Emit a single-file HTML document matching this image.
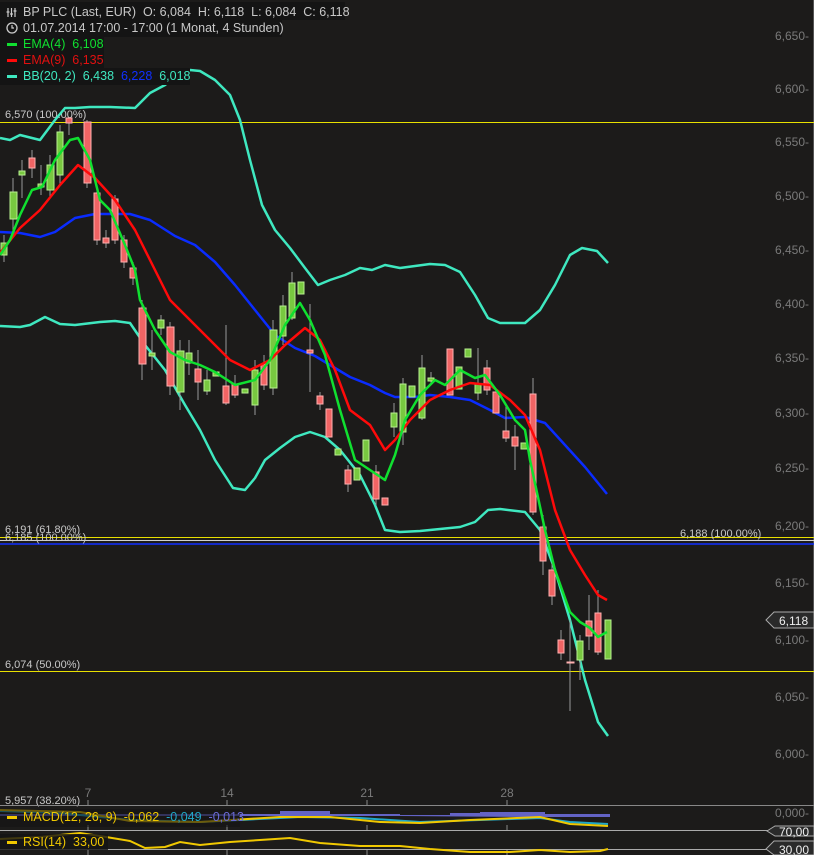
<!DOCTYPE html>
<html><head><meta charset="utf-8"><style>
html,body{margin:0;padding:0;background:#1c1b1a;}
svg{display:block;font-family:"Liberation Sans",sans-serif;}
.pre{white-space:pre;}
</style></head><body>
<svg width="814" height="855" viewBox="0 0 814 855" xmlns="http://www.w3.org/2000/svg">
<rect width="814" height="855" fill="#1c1b1a"/>
<line x1="813.5" y1="0" x2="813.5" y2="855" stroke="#555" stroke-width="1"/>
<g fill="#7a7a7a" font-size="12" text-anchor="end">
<text x="809" y="40">6,650-</text><text x="809" y="93">6,600-</text><text x="809" y="146">6,550-</text>
<text x="809" y="200">6,500-</text><text x="809" y="254">6,450-</text><text x="809" y="308">6,400-</text>
<text x="809" y="362">6,350-</text><text x="809" y="417">6,300-</text><text x="809" y="472">6,250-</text>
<text x="809" y="530">6,200-</text><text x="809" y="587">6,150-</text><text x="809" y="644">6,100-</text>
<text x="809" y="701">6,050-</text><text x="809" y="758">6,000-</text>
<text x="809" y="817">0,000-</text>
</g>
<g fill="#7a7a7a" font-size="12" text-anchor="middle">
<text x="88" y="797">7</text><text x="227" y="797">14</text><text x="367" y="797">21</text><text x="507" y="797">28</text>
</g>
<line x1="0" y1="122.5" x2="814" y2="122.5" stroke="#e8e000"/>
<line x1="0" y1="537.5" x2="814" y2="537.5" stroke="#e8e000"/>
<line x1="0" y1="540.5" x2="814" y2="540.5" stroke="#d0d0d0"/>
<line x1="0" y1="544" x2="814" y2="544" stroke="#1030ff" stroke-width="1.5"/>
<line x1="0" y1="671.5" x2="814" y2="671.5" stroke="#e8e000"/>
<g fill="#c8c8c8" font-size="11">
<text x="5" y="118">6,570 (100.00%)</text>
<text x="5" y="533">6,191 (61.80%)</text>
<text x="5" y="541">6,185 (100.00%)</text>
<text x="680" y="537">6,188 (100.00%)</text>
<text x="5" y="668">6,074 (50.00%)</text>
<text x="5" y="804">5,957 (38.20%)</text>
</g>
<g fill="none" stroke-width="2.5" stroke-linejoin="round">
<polyline stroke="#3fe8c0" points="0,138 10,140 20,135 40,140 55,120 65,108 75,108 90,107 110,107 135,108 150,93 165,85 180,72 190,70 200,71 215,80 230,95 240,120 250,160 262,205 275,230 290,248 305,268 318,285 330,280 345,275 360,268 372,270 385,265 400,268 415,266 430,264 445,265 460,272 475,295 488,318 500,323 525,323 540,310 555,285 570,255 582,248 597,251 608,263"/>
<polyline stroke="#3fe8c0" points="0,326 20,327 30,325 45,317 60,324 75,325 100,322 115,321 130,323 145,345 165,370 185,405 200,430 215,460 233,488 245,490 255,478 265,460 280,448 295,437 310,432 325,437 340,450 360,475 375,505 385,530 400,532 420,531 440,529 460,527 475,522 488,510 500,509 525,512 540,530 555,570 570,620 585,680 598,722 608,736"/>
<polyline stroke="#0a2cff" points="0,232 20,233 40,237 55,232 75,218 95,214 130,214 150,220 175,236 195,245 215,262 235,285 255,310 275,335 295,348 315,356 330,365 350,377 370,385 385,393 395,397 415,397 430,395 450,397 470,400 490,410 505,418 525,417 545,423 565,445 585,467 607,494"/>
</g>
<g stroke="#999" stroke-width="1">
<line x1="4" y1="235" x2="4" y2="262"/><line x1="13" y1="178" x2="13" y2="230"/><line x1="22" y1="160" x2="22" y2="198"/><line x1="32" y1="150" x2="32" y2="178"/><line x1="41" y1="165" x2="41" y2="195"/><line x1="50" y1="155" x2="50" y2="197"/><line x1="60" y1="125" x2="60" y2="185"/><line x1="69" y1="120" x2="69" y2="135"/><line x1="87" y1="120" x2="87" y2="188"/><line x1="97" y1="185" x2="97" y2="245"/><line x1="106" y1="230" x2="106" y2="248"/><line x1="115" y1="195" x2="115" y2="244"/><line x1="124" y1="235" x2="124" y2="268"/><line x1="133" y1="262" x2="133" y2="285"/><line x1="142" y1="300" x2="142" y2="380"/><line x1="152" y1="330" x2="152" y2="370"/><line x1="161" y1="315" x2="161" y2="335"/><line x1="170" y1="322" x2="170" y2="395"/><line x1="180" y1="340" x2="180" y2="410"/><line x1="189" y1="340" x2="189" y2="375"/><line x1="198" y1="350" x2="198" y2="400"/><line x1="207" y1="370" x2="207" y2="395"/><line x1="226" y1="325" x2="226" y2="405"/><line x1="235" y1="375" x2="235" y2="398"/><line x1="255" y1="360" x2="255" y2="415"/><line x1="264" y1="355" x2="264" y2="390"/><line x1="273" y1="320" x2="273" y2="395"/><line x1="283" y1="295" x2="283" y2="345"/><line x1="292" y1="272" x2="292" y2="320"/><line x1="310" y1="304" x2="310" y2="392"/><line x1="320" y1="392" x2="320" y2="410"/><line x1="348" y1="465" x2="348" y2="492"/><line x1="376" y1="465" x2="376" y2="505"/><line x1="394" y1="403" x2="394" y2="437"/><line x1="403" y1="378" x2="403" y2="445"/><line x1="422" y1="355" x2="422" y2="420"/><line x1="431" y1="372" x2="431" y2="385"/><line x1="478" y1="348" x2="478" y2="400"/><line x1="487" y1="360" x2="487" y2="395"/><line x1="506" y1="405" x2="506" y2="442"/><line x1="515" y1="425" x2="515" y2="470"/><line x1="533" y1="378" x2="533" y2="515"/><line x1="543" y1="515" x2="543" y2="575"/><line x1="552" y1="562" x2="552" y2="605"/><line x1="561" y1="630" x2="561" y2="660"/><line x1="570" y1="620" x2="570" y2="711"/><line x1="580" y1="635" x2="580" y2="680"/><line x1="589" y1="595" x2="589" y2="650"/><line x1="598" y1="590" x2="598" y2="655"/>
</g>
<g fill="#78c840" stroke="#b8f090" stroke-width="1">
<rect x="1" y="243" width="6" height="12"/><rect x="10" y="192" width="7" height="27"/><rect x="19" y="171" width="6" height="4"/><rect x="38" y="184" width="6" height="3"/><rect x="47" y="165" width="7" height="25"/><rect x="57" y="132" width="6" height="43"/><rect x="149" y="353" width="6" height="3"/><rect x="158" y="320" width="6" height="8"/><rect x="177" y="351" width="7" height="41"/><rect x="186" y="353" width="6" height="10"/><rect x="204" y="380" width="6" height="11"/><rect x="213" y="372" width="6" height="4"/><rect x="242" y="389" width="6" height="4"/><rect x="252" y="370" width="6" height="35"/><rect x="270" y="330" width="7" height="58"/><rect x="280" y="306" width="6" height="30"/><rect x="289" y="283" width="6" height="35"/><rect x="298" y="282" width="6" height="12"/><rect x="335" y="449" width="6" height="6"/><rect x="354" y="468" width="6" height="12"/><rect x="363" y="440" width="6" height="21"/><rect x="391" y="413" width="6" height="14"/><rect x="400" y="384" width="6" height="48"/><rect x="409" y="386" width="6" height="11"/><rect x="419" y="368" width="6" height="50"/><rect x="428" y="378" width="6" height="3"/><rect x="456" y="367" width="6" height="22"/><rect x="465" y="349" width="6" height="8"/><rect x="475" y="384" width="6" height="9"/><rect x="521" y="443" width="6" height="6"/><rect x="577" y="641" width="6" height="19"/><rect x="605" y="620" width="6" height="39"/>
</g>
<g fill="#f06464" stroke="#ffb0b0" stroke-width="1">
<rect x="29" y="158" width="6" height="10"/><rect x="66" y="118" width="6" height="5"/><rect x="84" y="122" width="7" height="61"/><rect x="94" y="193" width="6" height="47"/><rect x="103" y="238" width="6" height="5"/><rect x="112" y="199" width="6" height="41"/><rect x="121" y="240" width="6" height="22"/><rect x="130" y="268" width="6" height="10"/><rect x="139" y="308" width="7" height="56"/><rect x="167" y="327" width="7" height="59"/><rect x="195" y="369" width="6" height="13"/><rect x="223" y="386" width="6" height="17"/><rect x="232" y="384" width="6" height="11"/><rect x="261" y="364" width="6" height="21"/><rect x="307" y="350" width="6" height="3"/><rect x="317" y="396" width="6" height="8"/><rect x="326" y="409" width="6" height="28"/><rect x="345" y="470" width="6" height="14"/><rect x="373" y="472" width="6" height="27"/><rect x="382" y="498" width="6" height="7"/><rect x="447" y="349" width="6" height="46"/><rect x="484" y="368" width="6" height="22"/><rect x="493" y="392" width="6" height="21"/><rect x="503" y="431" width="6" height="7"/><rect x="512" y="437" width="6" height="9"/><rect x="530" y="394" width="6" height="118"/><rect x="540" y="527" width="6" height="34"/><rect x="549" y="570" width="6" height="26"/><rect x="558" y="640" width="6" height="13"/><rect x="567" y="662" width="7" height="1"/><rect x="586" y="621" width="6" height="15"/><rect x="595" y="613" width="6" height="39"/>
</g>
<g fill="none" stroke-width="2.5" stroke-linejoin="round">
<polyline stroke="#ff0a0a" points="0,253 20,228 40,210 60,185 78,165 95,178 115,200 135,230 150,260 170,300 190,320 210,340 230,360 250,370 270,360 285,345 305,328 320,340 335,370 350,410 370,425 385,450 395,440 410,420 430,400 450,390 470,383 490,385 510,400 525,415 540,450 555,510 570,550 585,575 598,595 607,600"/>
<polyline stroke="#10e030" points="0,255 10,240 20,215 32,190 42,187 55,160 70,140 78,138 90,160 100,200 110,210 125,245 135,270 140,300 155,330 170,352 185,360 200,365 215,372 235,385 255,380 270,360 285,325 300,303 310,320 325,355 340,410 355,460 370,470 385,480 395,455 405,420 420,395 435,380 445,385 460,370 475,378 485,375 500,395 515,420 525,430 530,460 545,530 555,570 570,612 580,622 590,628 598,637 607,632"/>
</g>
<g font-size="12.5">
<rect x="0" y="2" width="345" height="18" fill="#141414"/>
<rect x="0" y="19" width="282" height="18" fill="#141414"/>
<rect x="0" y="36" width="104" height="17" fill="#141414"/>
<rect x="0" y="52" width="104" height="17" fill="#141414"/>
<rect x="0" y="68" width="190" height="17" fill="#141414"/>
<g stroke="#ccc" stroke-width="1.2" fill="none"><line x1="8" y1="8" x2="8" y2="17"/><line x1="11.5" y1="8" x2="11.5" y2="17"/><line x1="15" y1="8" x2="15" y2="17"/><line x1="6.5" y1="12" x2="9.5" y2="12"/><line x1="10" y1="14" x2="13" y2="14"/><line x1="13.5" y1="11" x2="16.5" y2="11"/></g>
<circle cx="12" cy="28" r="5" fill="none" stroke="#ccc" stroke-width="1.3"/><path d="M12 25v3h2" stroke="#ccc" fill="none" stroke-width="1.2"/>
<text class="pre" x="23" y="16" fill="#c8c8c8">BP PLC (Last, EUR)  O: 6,084  H: 6,118  L: 6,084  C: 6,118</text>
<text class="pre" x="23" y="32" fill="#c8c8c8">01.07.2014 17:00 - 17:00 (1 Monat, 4 Stunden)</text>
<rect x="7" y="43" width="10" height="3" fill="#10e030"/><text class="pre" x="23" y="48" fill="#10e030">EMA(4)  6,108</text>
<rect x="7" y="59" width="10" height="3" fill="#ff0a0a"/><text class="pre" x="23" y="64" fill="#e01010">EMA(9)  6,135</text>
<rect x="7" y="75" width="10" height="3" fill="#3fe8c0"/><text class="pre" x="23" y="80" fill="#3fe8c0">BB(20, 2)  6,438  <tspan fill="#1030ff">6,228</tspan>  6,018</text>
</g>
<path d="M766 620 L774 612 L814 612 L814 628 L774 628 Z" fill="#2a2a2a" stroke="#aaa"/>
<text x="779" y="625" fill="#eee" font-size="12">6,118</text>
<line x1="0" y1="805.5" x2="814" y2="805.5" stroke="#888"/>
<line x1="0" y1="830.5" x2="814" y2="830.5" stroke="#aaa"/>
<line x1="0" y1="849.5" x2="814" y2="849.5" stroke="#aaa"/>
<g stroke="#888"><line x1="88" y1="800" x2="88" y2="805"/><line x1="227" y1="800" x2="227" y2="805"/><line x1="367" y1="800" x2="367" y2="805"/><line x1="507" y1="800" x2="507" y2="805"/>
<line x1="88" y1="825" x2="88" y2="830"/><line x1="227" y1="825" x2="227" y2="830"/><line x1="367" y1="825" x2="367" y2="830"/><line x1="507" y1="825" x2="507" y2="830"/>
<line x1="88" y1="850" x2="88" y2="855"/><line x1="227" y1="850" x2="227" y2="855"/><line x1="367" y1="850" x2="367" y2="855"/><line x1="507" y1="850" x2="507" y2="855"/></g>
<path d="M0 814 L280 814 L280 811 L330 811 L330 814 L400 814 L400 815 L450 815 L450 813 L480 813 L480 812 L545 812 L545 814 L610 814 L610 817 L530 817 L400 816 L0 816Z" fill="#6b6bd8" opacity="0.9"/>
<polyline fill="none" stroke="#20a8c8" stroke-width="2" points="0,811 60,813 130,820 200,822 300,817 360,818 420,822 480,820 540,818 570,822 608,824"/>
<polyline fill="none" stroke="#f0c800" stroke-width="2" points="0,810 80,812 130,821 200,822 280,817 330,817 380,822 420,823 470,820 540,817 570,824 608,826"/>
<rect x="0" y="809" width="240" height="18" fill="#141414" opacity="0.6"/>
<rect x="7" y="816" width="10" height="3" fill="#f0c800"/>
<text class="pre" x="23" y="821" font-size="12.5" fill="#f0c800">MACD(12, 26, 9)  -0,062  <tspan fill="#20a8c8">-0,049</tspan>  <tspan fill="#6b6bd8">-0,013</tspan></text>
<polyline fill="none" stroke="#f0c800" stroke-width="2" points="0,839 40,837 80,833 100,836 130,841 145,848 165,847 180,842 200,845 230,842 260,840 290,838 320,843 360,846 400,846 430,849 470,852 510,852 540,850 570,852 600,851 608,849"/>
<rect x="0" y="834" width="108" height="16" fill="#141414" opacity="0.8"/>
<rect x="7" y="841" width="10" height="3" fill="#f0c800"/>
<text class="pre" x="23" y="846" font-size="12.5" fill="#f0c800">RSI(14)  33,00</text>
<path d="M767 831 L775 826 L814 826 L814 836 L775 836 Z" fill="#2a2a2a" stroke="#aaa"/>
<text x="779" y="836" fill="#eee" font-size="12">70,00</text>
<path d="M766 849 L774 841 L814 841 L814 855 L774 855 Z" fill="#2a2a2a" stroke="#aaa"/>
<text x="779" y="854" fill="#eee" font-size="12">30,00</text>
</svg>
</body></html>
